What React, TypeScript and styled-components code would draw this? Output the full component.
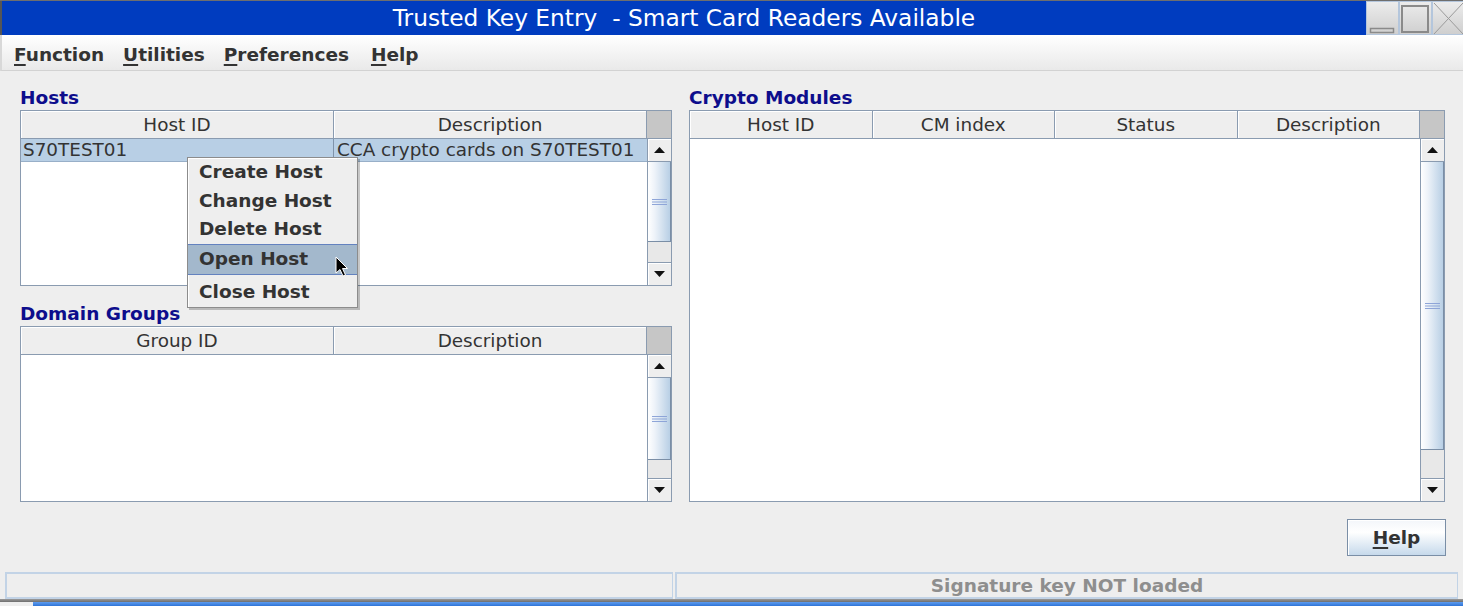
import React from 'react';
import styled, { createGlobalStyle } from 'styled-components';

const GlobalStyle = createGlobalStyle`
  html, body {
    margin: 0;
    padding: 0;
    background: #eeeeee;
  }
  body {
    font-family: "DejaVu Sans", "Liberation Sans", sans-serif;
  }
`;

const BORDER = '#8a9bb0';

const Window = styled.div`
  width: 1463px;
  height: 606px;
  display: flex;
  flex-direction: column;
  background: #eeeeee;
  overflow: hidden;
  position: relative;
`;

const TitleBar = styled.div`
  height: 35px;
  flex-shrink: 0;
  display: flex;
  border-top: 1px solid #6e6e6e;
  box-sizing: border-box;
`;

const TitleBlue = styled.div`
  flex: 1;
  background: #003cbf;
  border-left: 2px solid #555;
  color: #ffffff;
  font-size: 23.3px;
  display: flex;
  align-items: center;
  justify-content: center;
  white-space: pre;
  padding-bottom: 1px;
`;

const WinButtons = styled.div`
  display: flex;
  width: 97px;
`;

const WinButton = styled.div`
  flex: 1;
  box-sizing: border-box;
  border: 1px solid #b4c6dc;
  background: linear-gradient(to bottom, #ececec, #cfcfcf);
  display: flex;
`;

const MenuBar = styled.div`
  height: 36px;
  flex-shrink: 0;
  box-sizing: border-box;
  display: flex;
  align-items: center;
  gap: 19px;
  padding: 3px 0 0 12px;
  background: linear-gradient(to bottom, #ffffff, #e9e9e9);
  border-bottom: 1px solid #d2d2d2;
  border-left: 2px solid #d8d8d8;
`;

const MenuItem = styled.span<{ $extra?: number }>`
  font-weight: bold;
  font-size: 18.5px;
  color: #333333;
  margin-left: ${(p) => p.$extra ?? 0}px;
  u {
    text-decoration-thickness: 2px;
    text-underline-offset: 3px;
  }
`;

const Content = styled.div`
  height: 501px;
  flex-shrink: 0;
  box-sizing: border-box;
  display: flex;
  flex-direction: column;
  padding: 14px 17px 0 20px;
`;

const Columns = styled.div`
  display: grid;
  grid-template-columns: 652px 756px;
  column-gap: 17px;
`;

const Column = styled.div`
  display: flex;
  flex-direction: column;
`;

const SectionLabel = styled.div<{ $top?: number; $h?: number }>`
  height: ${(p) => p.$h ?? 25}px;
  line-height: ${(p) => p.$h ?? 25}px;
  margin-top: ${(p) => p.$top ?? 0}px;
  font-weight: bold;
  font-size: 18.5px;
  color: #0d0d8c;
`;

const TableBox = styled.div<{ $height: number }>`
  height: ${(p) => p.$height}px;
  box-sizing: border-box;
  border: 1px solid ${BORDER};
  display: flex;
  background: #ffffff;
`;

const TableMain = styled.div`
  flex: 1;
  min-width: 0;
  display: flex;
  flex-direction: column;
`;

const HeaderRow = styled.div<{ $cols: number }>`
  display: grid;
  grid-template-columns: repeat(${(p) => p.$cols}, 1fr);
  height: 28px;
  flex-shrink: 0;
`;

const HeaderCell = styled.div`
  box-sizing: border-box;
  border-right: 1px solid ${BORDER};
  border-bottom: 1px solid ${BORDER};
  background: #eeeeee;
  box-shadow: inset 1px 1px 0 #ffffff;
  text-align: center;
  line-height: 27px;
  font-size: 18.4px;
  color: #333333;
  white-space: nowrap;
  overflow: hidden;
`;

const Body = styled.div`
  flex: 1;
  background: #ffffff;
`;

const DataRow = styled.div<{ $cols: number; $selected?: boolean }>`
  display: grid;
  grid-template-columns: repeat(${(p) => p.$cols}, 1fr);
  height: 23px;
  box-sizing: border-box;
  background: ${(p) => (p.$selected ? '#b8cfe5' : '#ffffff')};
  border-bottom: 1px solid ${(p) => (p.$selected ? '#98afc8' : 'transparent')};
`;

const DataCell = styled.div`
  box-sizing: border-box;
  padding-left: 2px;
  line-height: 22px;
  font-size: 18.4px;
  color: #333333;
  white-space: nowrap;
  overflow: hidden;
  border-right: 1px solid #7f93aa;
  &:last-child {
    border-right: none;
    padding-left: 3px;
  }
`;

const ScrollColumn = styled.div`
  width: 24px;
  flex-shrink: 0;
  display: flex;
  flex-direction: column;
`;

const Corner = styled.div`
  height: 28px;
  flex-shrink: 0;
  box-sizing: border-box;
  background: #c6c6c6;
  border-bottom: 1px solid ${BORDER};
`;

const ScrollTrack = styled.div`
  flex: 1;
  display: flex;
  flex-direction: column;
  border-left: 1px solid ${BORDER};
  background: #e6e6e6;
`;

const ArrowButton = styled.div`
  height: 23px;
  flex-shrink: 0;
  box-sizing: border-box;
  background: #eeeeee;
  box-shadow: inset 1px 1px 0 #ffffff;
  border-bottom: 1px solid ${BORDER};
  display: flex;
  align-items: center;
  justify-content: center;
  &:last-child {
    border-bottom: none;
    border-top: 1px solid ${BORDER};
  }
`;

const Thumb = styled.div<{ $h: number }>`
  height: ${(p) => p.$h}px;
  flex-shrink: 0;
  box-sizing: border-box;
  border-bottom: 1px solid #7a8ea6;
  border-right: 1px solid #7a8ea6;
  background: linear-gradient(to right, #ffffff 0%, #eef3f9 30%, #b8cfe5 100%);
  display: flex;
  align-items: center;
  justify-content: center;
`;

const TrackRest = styled.div`
  flex: 1;
  background: #e8e8e8;
`;

const HelpRow = styled.div`
  display: flex;
  justify-content: flex-end;
  margin-top: 17px;
`;

const Button = styled.div`
  width: 99px;
  height: 37px;
  box-sizing: border-box;
  border: 1px solid #7a8ea6;
  box-shadow: inset 1px 1px 0 #ffffff;
  background: linear-gradient(to bottom, #f3f6fa 0%, #ffffff 35%, #dce8f3 75%, #c6d9eb 100%);
  display: flex;
  align-items: center;
  justify-content: center;
  font-weight: bold;
  font-size: 18.5px;
  color: #333333;
  u {
    text-decoration-thickness: 2px;
    text-underline-offset: 3px;
  }
`;

const StatusBar = styled.div`
  height: 27px;
  flex-shrink: 0;
  display: grid;
  grid-template-columns: 668px 1fr;
  column-gap: 2px;
  padding: 0 5px;
`;

const StatusCell = styled.div`
  box-sizing: border-box;
  border: 2px solid #c2d3e6;
  border-right-width: 1px;
  display: flex;
  align-items: center;
  justify-content: center;
  font-weight: bold;
  font-size: 18.5px;
  color: #8e8e8e;
`;

const BottomEdge = styled.div`
  height: 7px;
  flex-shrink: 0;
  display: flex;
  flex-direction: column;
`;

const EdgeLine = styled.div`
  height: 3px;
  background: linear-gradient(to bottom, #9a9a9a, #6e6e6e);
`;

const EdgeStrip = styled.div`
  flex: 1;
  margin-left: 33px;
  background: linear-gradient(to bottom, #5d9cf0, #2f74d6);
`;

const Popup = styled.div`
  position: absolute;
  left: 187px;
  top: 157px;
  width: 171px;
  box-sizing: border-box;
  background: #eeeeee;
  border: 1px solid #8c8c8c;
  box-shadow: 2px 2px 0 rgba(0, 0, 0, 0.22), inset 1px 1px 0 #ffffff;
  padding: 0 0 1px 0;
  display: flex;
  flex-direction: column;
`;

const PopupItem = styled.div<{ $gap?: number }>`
  height: 28.5px;
  line-height: 28.5px;
  padding-left: 11px;
  margin-top: ${(p) => p.$gap ?? 0}px;
  font-weight: bold;
  font-size: 18.5px;
  color: #333333;
`;

const ActivePopupItem = styled(PopupItem)`
  height: 29px;
  line-height: 27px;
  background: #a3b8cc;
  border-top: 1px solid #6382bf;
  border-bottom: 1px solid #6382bf;
`;

const Cursor = styled.svg`
  position: absolute;
  left: 335px;
  top: 256px;
`;

const ArrowIcon: React.FC<{ down?: boolean }> = ({ down }) => (
  <svg width="11" height="6" viewBox="0 0 11 6">
    {down ? <polygon points="0,0 11,0 5.5,6" fill="#111" /> : <polygon points="0,6 11,6 5.5,0" fill="#111" />}
  </svg>
);

const Grip: React.FC = () => (
  <svg width="15" height="6" viewBox="0 0 15 6">
    <rect x="0" y="0" width="15" height="1" fill="#8ea5d8" />
    <rect x="0" y="2.5" width="15" height="1" fill="#8ea5d8" />
    <rect x="0" y="5" width="15" height="1" fill="#8ea5d8" />
  </svg>
);

type ScrollProps = { thumb: number };

const ScrollBar: React.FC<ScrollProps> = ({ thumb }) => (
  <ScrollColumn>
    <Corner />
    <ScrollTrack>
      <ArrowButton>
        <ArrowIcon />
      </ArrowButton>
      <Thumb $h={thumb}>
        <Grip />
      </Thumb>
      <TrackRest />
      <ArrowButton>
        <ArrowIcon down />
      </ArrowButton>
    </ScrollTrack>
  </ScrollColumn>
);

type TableProps = {
  columns: string[];
  rows?: string[][];
  selected?: number;
  height: number;
  thumb: number;
};

const Table: React.FC<TableProps> = ({ columns, rows = [], selected, height, thumb }) => (
  <TableBox $height={height}>
    <TableMain>
      <HeaderRow $cols={columns.length}>
        {columns.map((c) => (
          <HeaderCell key={c}>{c}</HeaderCell>
        ))}
      </HeaderRow>
      <Body>
        {rows.map((r, i) => (
          <DataRow key={i} $cols={columns.length} $selected={i === selected}>
            {r.map((v, j) => (
              <DataCell key={j}>{v}</DataCell>
            ))}
          </DataRow>
        ))}
      </Body>
    </TableMain>
    <ScrollBar thumb={thumb} />
  </TableBox>
);

const App: React.FC = () => {
  const hostRows = [['S70TEST01', 'CCA crypto cards on S70TEST01']];

  return (
    <Window>
      <GlobalStyle />
      <TitleBar>
        <TitleBlue>Trusted Key Entry  - Smart Card Readers Available</TitleBlue>
        <WinButtons>
          <WinButton>
            <svg width="31" height="33" viewBox="0 0 31 33">
              <rect x="3.5" y="26.5" width="23" height="4" fill="none" stroke="#8a8a8a" strokeWidth="1.5" />
            </svg>
          </WinButton>
          <WinButton>
            <svg width="31" height="33" viewBox="0 0 31 33">
              <rect x="2" y="4" width="26" height="26" fill="none" stroke="#8a8a8a" strokeWidth="2" />
            </svg>
          </WinButton>
          <WinButton>
            <svg width="31" height="33" viewBox="0 0 31 33">
              <line x1="1" y1="1" x2="30" y2="32" stroke="#9a9a9a" strokeWidth="1" />
              <line x1="30" y1="1" x2="1" y2="32" stroke="#9a9a9a" strokeWidth="1" />
            </svg>
          </WinButton>
        </WinButtons>
      </TitleBar>

      <MenuBar>
        <MenuItem>
          <u>F</u>unction
        </MenuItem>
        <MenuItem>
          <u>U</u>tilities
        </MenuItem>
        <MenuItem>
          <u>P</u>references
        </MenuItem>
        <MenuItem $extra={3}>
          <u>H</u>elp
        </MenuItem>
      </MenuBar>

      <Content>
        <Columns>
          <Column>
            <SectionLabel>Hosts</SectionLabel>
            <Table columns={['Host ID', 'Description']} rows={hostRows} selected={0} height={176} thumb={80} />
            <SectionLabel $top={16} $h={24}>
              Domain Groups
            </SectionLabel>
            <Table columns={['Group ID', 'Description']} height={176} thumb={82} />
          </Column>
          <Column>
            <SectionLabel>Crypto Modules</SectionLabel>
            <Table columns={['Host ID', 'CM index', 'Status', 'Description']} height={392} thumb={288} />
          </Column>
        </Columns>
        <HelpRow>
          <Button>
            <span>
              <u>H</u>elp
            </span>
          </Button>
        </HelpRow>
      </Content>

      <StatusBar>
        <StatusCell />
        <StatusCell>Signature key NOT loaded</StatusCell>
      </StatusBar>
      <BottomEdge>
        <EdgeLine />
        <EdgeStrip />
      </BottomEdge>

      <Popup>
        <PopupItem>Create Host</PopupItem>
        <PopupItem>Change Host</PopupItem>
        <PopupItem>Delete Host</PopupItem>
        <ActivePopupItem>Open Host</ActivePopupItem>
        <PopupItem $gap={3}>Close Host</PopupItem>
      </Popup>

      <Cursor width="14" height="22" viewBox="0 0 14 22">
        <path d="M1 1 L1 17 L5 13.5 L8 20 L10.5 19 L7.5 12.5 L12.5 12.5 Z" fill="#000" stroke="#fff" strokeWidth="1" />
      </Cursor>
    </Window>
  );
};

export default App;
